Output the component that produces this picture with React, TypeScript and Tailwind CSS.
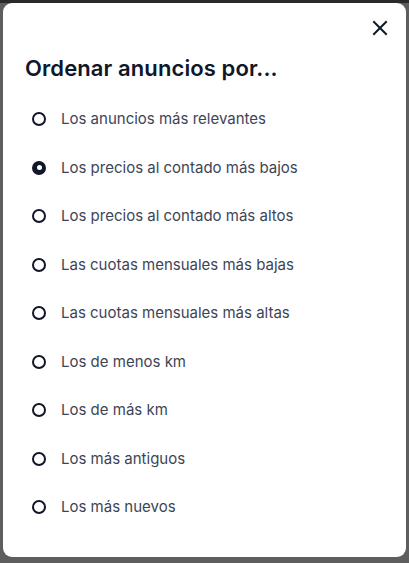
import React from "react";

const options = [
  "Los anuncios más relevantes",
  "Los precios al contado más bajos",
  "Los precios al contado más altos",
  "Las cuotas mensuales más bajas",
  "Las cuotas mensuales más altas",
  "Los de menos km",
  "Los de más km",
  "Los más antiguos",
  "Los más nuevos",
];

export default function App() {
  return (
    <div className="w-[409px] h-[563px] bg-[#5e5e5e] flex flex-col overflow-hidden" style={{ fontFamily: "Inter, 'Open Sans', sans-serif" }}>
      <div className="h-[3px] bg-[#2a2a2a] shrink-0" />
      <div className="flex-1 flex px-[3px] pb-[6px]">
        <div className="flex-1 bg-white rounded-[9px] flex flex-col pt-[16px]">
          <div className="flex justify-end pr-[17px]">
            <svg width="18" height="18" viewBox="0 0 18 18" fill="none" stroke="#111827" strokeWidth="2" strokeLinecap="square">
              <path d="M3 3L15 15M15 3L3 15" />
            </svg>
          </div>
          <h2 className="mt-[18px] ml-[22px] text-[22px] leading-[26px] font-semibold text-[#0f1729] tracking-[0.1px]">
            Ordenar anuncios por...
          </h2>
          <ul className="mt-[14px] flex flex-col">
            {options.map((o, i) => (
              <li key={o} className="h-[48.5px] flex items-center pl-[29px] gap-[15px]">
                {i === 1 ? (
                  <span className="w-[14px] h-[14px] rounded-full bg-[#0f1729] flex items-center justify-center">
                    <span className="w-[5px] h-[5px] rounded-full bg-white" />
                  </span>
                ) : (
                  <span className="w-[14px] h-[14px] rounded-full border-2 border-[#0f1729]" />
                )}
                <span className="text-[15px] text-[#3c4556]">{o}</span>
              </li>
            ))}
          </ul>
        </div>
      </div>
    </div>
  );
}
